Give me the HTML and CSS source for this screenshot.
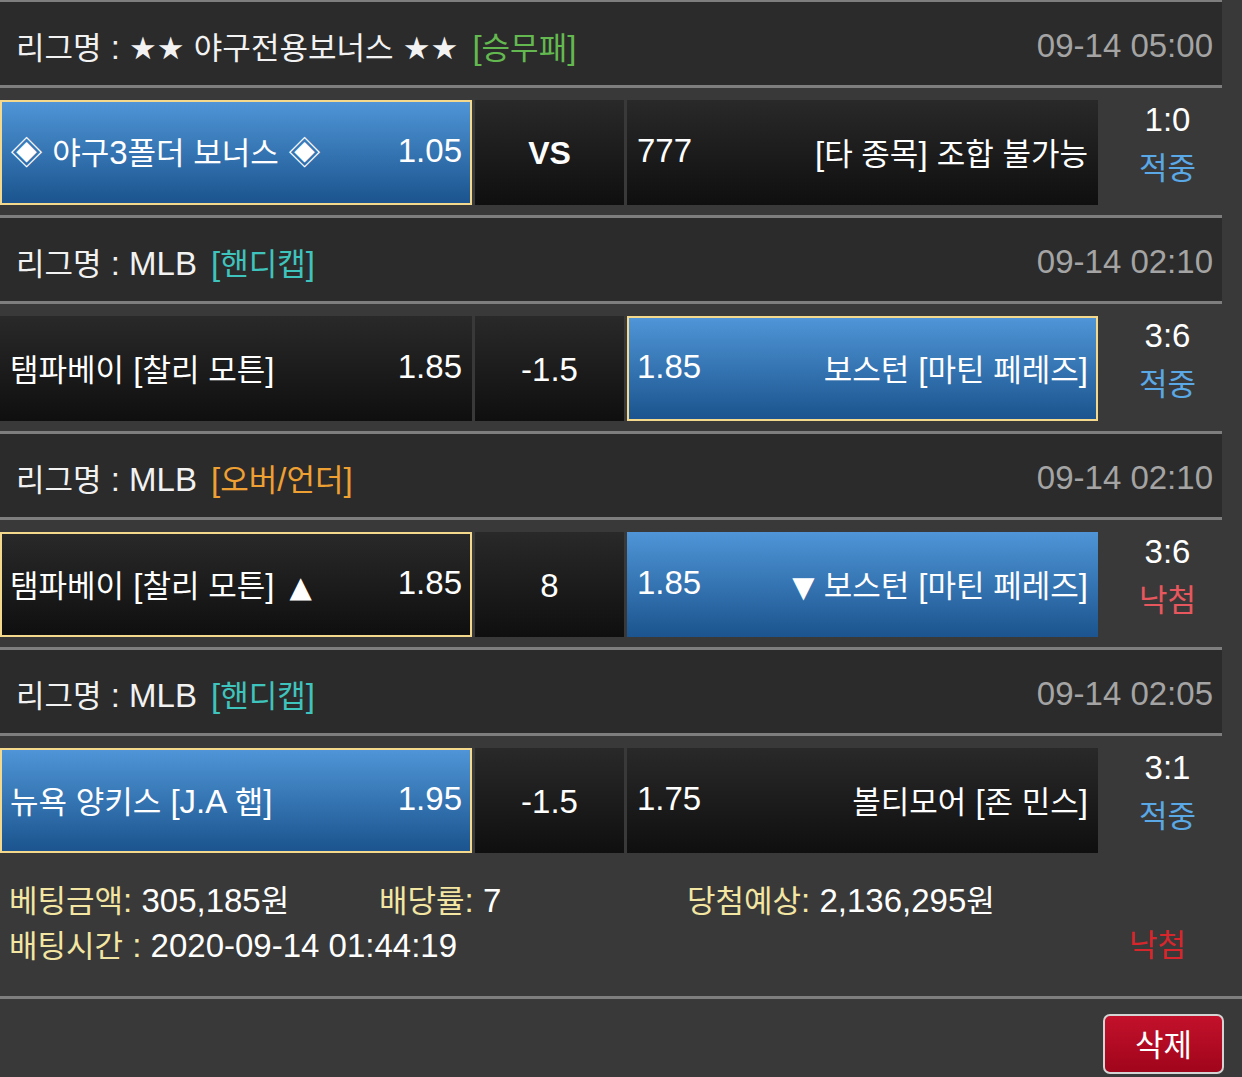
FILE: index.html
```html
<!DOCTYPE html>
<html lang="ko">
<head>
<meta charset="utf-8">
<title>배팅내역</title>
<link rel="stylesheet" href="styles.css">
</head>
<body>
<div class="slip">
  <div class="list">
    <div class="league first">
      <div class="league-name"><span class="k">리그명</span> : <span class="star">★★</span> <span class="k">야구전용보너스</span> <span class="star">★★</span> <span class="tag green">[<span class="k">승무패</span>]</span></div>
      <div class="date">09-14 05:00</div>
    </div>
    <div class="match">
      <div class="cell side home blue sel"><span class="name"><span class="sym">◈</span> <span class="k">야구</span>3<span class="k">폴더 보너스</span> <span class="sym">◈</span></span><span class="odd">1.05</span></div>
      <div class="cell mid"><b class="vs">VS</b></div>
      <div class="cell side away"><span class="odd">777</span><span class="name">[<span class="k">타 종목</span>] <span class="k">조합 불가능</span></span></div>
      <div class="score"><div>1:0</div><div class="k hit">적중</div></div>
    </div>

    <div class="league">
      <div class="league-name"><span class="k">리그명</span> : MLB <span class="tag teal">[<span class="k">핸디캡</span>]</span></div>
      <div class="date">09-14 02:10</div>
    </div>
    <div class="match">
      <div class="cell side home"><span class="name"><span class="k">탬파베이</span> [<span class="k">찰리 모튼</span>]</span><span class="odd">1.85</span></div>
      <div class="cell mid">-1.5</div>
      <div class="cell side away blue sel"><span class="odd">1.85</span><span class="name"><span class="k">보스턴</span> [<span class="k">마틴 페레즈</span>]</span></div>
      <div class="score"><div>3:6</div><div class="k hit">적중</div></div>
    </div>

    <div class="league">
      <div class="league-name"><span class="k">리그명</span> : MLB <span class="tag orange">[<span class="k">오버</span>/<span class="k">언더</span>]</span></div>
      <div class="date">09-14 02:10</div>
    </div>
    <div class="match">
      <div class="cell side home sel"><span class="name"><span class="k">탬파베이</span> [<span class="k">찰리 모튼</span>] <span class="tri up">▲</span></span><span class="odd">1.85</span></div>
      <div class="cell mid">8</div>
      <div class="cell side away blue"><span class="odd">1.85</span><span class="name"><span class="tri">▼</span> <span class="k">보스턴</span> [<span class="k">마틴 페레즈</span>]</span></div>
      <div class="score"><div>3:6</div><div class="k miss">낙첨</div></div>
    </div>

    <div class="league">
      <div class="league-name"><span class="k">리그명</span> : MLB <span class="tag teal">[<span class="k">핸디캡</span>]</span></div>
      <div class="date">09-14 02:05</div>
    </div>
    <div class="match">
      <div class="cell side home blue sel"><span class="name"><span class="k">뉴욕 양키스</span> [J.A <span class="k">햅</span>]</span><span class="odd">1.95</span></div>
      <div class="cell mid">-1.5</div>
      <div class="cell side away"><span class="odd">1.75</span><span class="name"><span class="k">볼티모어</span> [<span class="k">존 민스</span>]</span></div>
      <div class="score"><div>3:1</div><div class="k hit">적중</div></div>
    </div>
  </div>

  <div class="summary">
    <div class="item"><span class="label"><span class="k">베팅금액</span>:</span> 305,185<span class="k">원</span></div>
    <div class="item"><span class="label"><span class="k">배당률</span>:</span> 7</div>
    <div class="item"><span class="label"><span class="k">당첨예상</span>:</span> 2,136,295<span class="k">원</span></div>
    <div class="item wide"><span class="label"><span class="k">배팅시간</span> :</span> 2020-09-14 01:44:19</div>
    <div class="item result k">낙첨</div>
  </div>

  <div class="actions">
    <button class="delete k" type="button">삭제</button>
  </div>
</div>
</body>
</html>
```

FILE: styles.css
```css
* {
  box-sizing: border-box;
}

html,
body {
  margin: 0;
  padding: 0;
}

body {
  width: 1242px;
  height: 1077px;
  overflow: hidden;
  background: #393939;
  color: #ffffff;
  font-family: "Liberation Sans", "Noto Sans CJK KR", sans-serif;
  font-size: 33px;
}

.k {
  font-family: "Noto Sans CJK KR", "Liberation Sans", sans-serif;
  font-size: 31px;
}

.star {
  font-family: "DejaVu Sans", sans-serif;
  font-size: 31px;
}

.sym {
  font-family: "Noto Sans CJK KR", sans-serif;
  font-size: 33px;
}

.tri {
  font-family: "DejaVu Sans", sans-serif;
  font-size: 29px;
}

.tri.up {
  margin-left: 6px;
}

.list {
  width: 1222px;
  margin-top: -1px;
}

.league {
  height: 89px;
  display: flex;
  align-items: center;
  justify-content: space-between;
  padding: 4px 9px 0 16px;
  background: #2b2b2b;
  border-top: 3px solid #7e7e7e;
  border-bottom: 3px solid #7e7e7e;
  white-space: nowrap;
}

.league-name {
  color: #f2f2f2;
}

.tag {
  margin-left: 5px;
}

.green {
  color: #63b94f;
}

.teal {
  color: #3fc3bd;
}

.orange {
  color: #efa032;
}

.date {
  color: #a4a4a4;
}

.match {
  height: 127px;
  padding: 12px 0 10px;
  display: grid;
  grid-template-columns: 472px 149px 471px 1fr;
  column-gap: 3px;
  align-items: start;
}

.cell {
  height: 105px;
  display: flex;
  align-items: center;
  padding-bottom: 3px;
  background: linear-gradient(#292929, #0f0f0f);
  white-space: nowrap;
}

.side {
  justify-content: space-between;
  padding-left: 10px;
  padding-right: 10px;
}

.cell.blue {
  background: linear-gradient(#4f95d7, #1b548e);
}

.cell.sel {
  border: 2px solid #f4d88c;
  padding-left: 8px;
  padding-right: 8px;
}

.mid {
  justify-content: center;
  padding-top: 2px;
  padding-bottom: 0;
}

.vs {
  font-weight: bold;
  font-size: 32px;
}

.score {
  margin-top: -3px;
  padding-left: 12px;
  text-align: center;
  line-height: 46px;
  color: #ffffff;
}

.hit {
  color: #5aa8e6;
}

.miss {
  color: #e8575e;
}

.summary {
  display: grid;
  grid-template-columns: 370px 308px 1fr;
  grid-auto-rows: 45px;
  align-items: center;
  padding: 13px 0 30px 9px;
  border-bottom: 3px solid #7e7e7e;
  white-space: nowrap;
}

.label {
  color: #f3e6a3;
}

.item.wide {
  grid-column: 1 / span 2;
}

.item.result {
  justify-self: end;
  margin-right: 56px;
  margin-bottom: 2px;
  color: #d7262c;
}

.actions {
  display: flex;
  justify-content: flex-end;
  padding: 15px 18px 0 0;
}

.delete {
  width: 121px;
  height: 60px;
  border: 2px solid #d4d4d4;
  border-radius: 7px;
  background: linear-gradient(#c3112b, #a0051b);
  color: #ffffff;
  font-size: 31px;
  line-height: 1;
  padding: 0 0 3px;
  cursor: pointer;
}
```
